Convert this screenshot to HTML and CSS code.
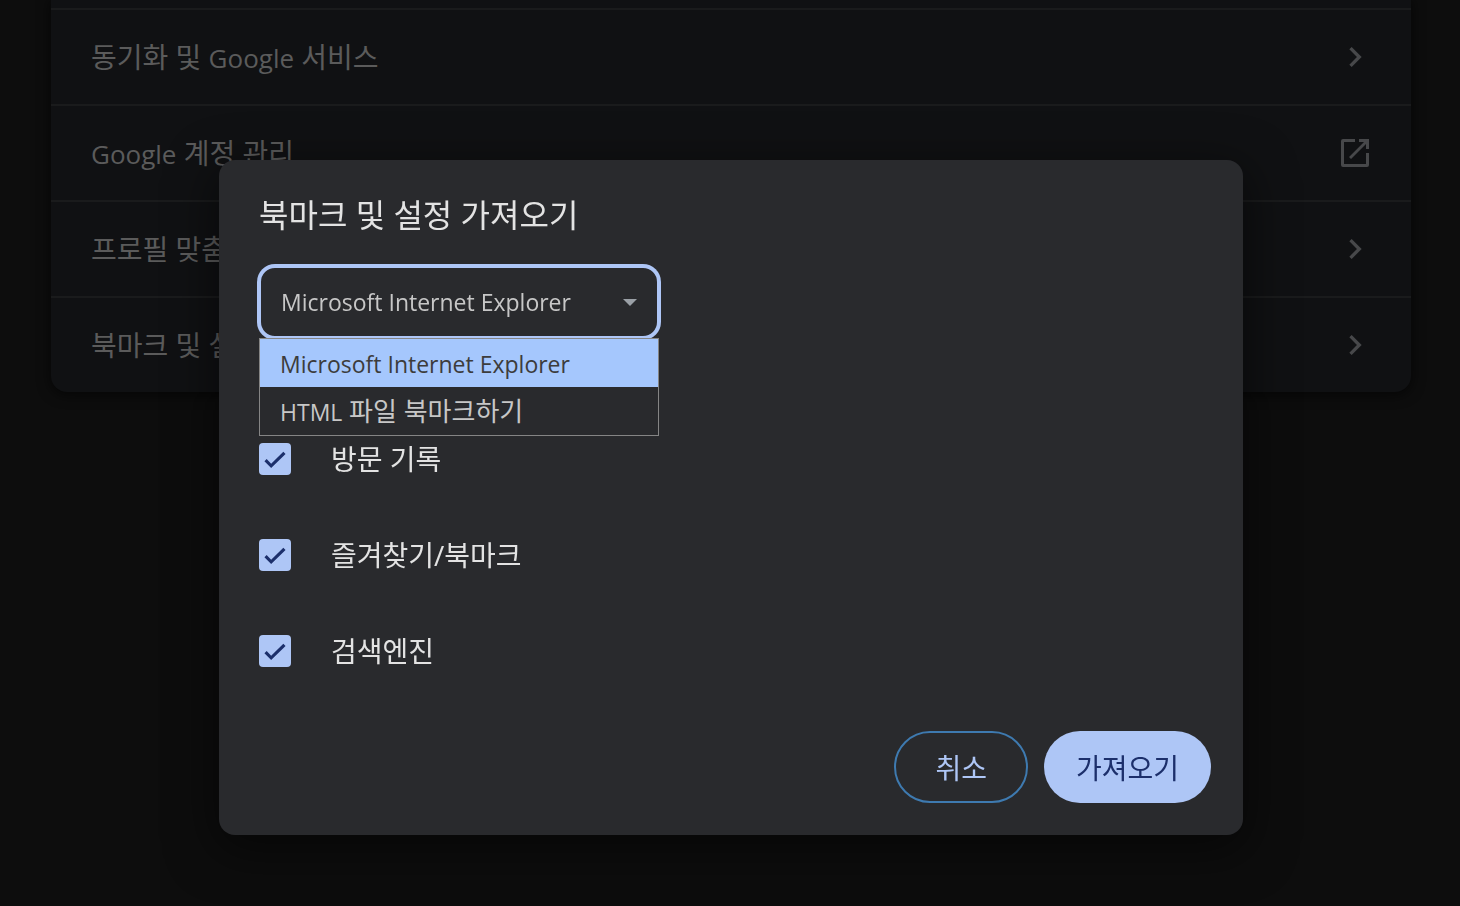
FILE: index.html
```html
<!doctype html>
<html lang="ko">
    <head>
        <meta charset="UTF-8" />
        <meta name="viewport" content="width=device-width, initial-scale=1.0" />
        <title>북마크 및 설정 가져오기</title>
        <link rel="stylesheet" href="styles.css">
    </head>
    <body>
        <main class="card">
            <a class="row" href="#sync">
                <span>동기화 및 <span class="latin">Google</span> 서비스</span>
                <svg class="icon" viewBox="0 0 24 24"><path d="M10 6 8.59 7.41 13.17 12l-4.58 4.59L10 18l6-6z" /></svg>
            </a>
            <a class="row" href="#account">
                <span><span class="latin">Google</span> 계정 관리</span>
                <svg class="icon" viewBox="0 0 40 40">
                    <path d="M20 6v3H9v22h22V20h3v12a2 2 0 0 1-2 2H8a2 2 0 0 1-2-2V8a2 2 0 0 1 2-2zM24 6h10v10h-3v-5L16 26l-2-2L29 9h-5z" />
                </svg>
            </a>
            <a class="row" href="#profile">
                <span>프로필 맞춤설정</span>
                <svg class="icon" viewBox="0 0 24 24"><path d="M10 6 8.59 7.41 13.17 12l-4.58 4.59L10 18l6-6z" /></svg>
            </a>
            <a class="row" href="#import">
                <span>북마크 및 설정 가져오기</span>
                <svg class="icon" viewBox="0 0 24 24"><path d="M10 6 8.59 7.41 13.17 12l-4.58 4.59L10 18l6-6z" /></svg>
            </a>
        </main>

        <div class="overlay">
            <form class="dialog" role="dialog" aria-labelledby="dialog-title">
                <h1 id="dialog-title">북마크 및 설정 가져오기</h1>
                <div class="select-wrap">
                    <select id="browser-select" aria-label="브라우저">
                        <option selected>Microsoft Internet Explorer</option>
                        <option>HTML 파일 북마크하기</option>
                    </select>
                    <svg class="arrow" viewBox="0 0 14 7"><path d="M0 0h14L7 7z" /></svg>
                    <ul class="options" role="listbox">
                        <li class="active" role="option"><span class="latin">Microsoft Internet Explorer</span></li>
                        <li role="option"><span class="latin">HTML</span> 파일 북마크하기</li>
                    </ul>
                </div>
                <div class="checks">
                    <label class="check"><input type="checkbox" checked /><span>방문 기록</span></label>
                    <label class="check"><input type="checkbox" checked /><span>즐겨찾기/북마크</span></label>
                    <label class="check"><input type="checkbox" checked /><span>검색엔진</span></label>
                </div>
                <div class="buttons">
                    <button type="button" class="cancel">취소</button>
                    <button type="button" class="import">가져오기</button>
                </div>
            </form>
        </div>
    </body>
</html>
```
FILE: styles.css
```css
* {
    box-sizing: border-box;
}
body {
    margin: 0;
    min-height: 100vh;
    background-color: #0d0d0d;
    color: #e3e3e3;
    font-family: "Open Sans", "Noto Sans CJK KR", sans-serif;
    font-size: 28px;
    line-height: 32px;
}
.card {
    max-width: 1360px;
    margin: 0 49px 0 51px;
    padding-top: 8px;
    background-color: #101113;
    border-radius: 0 0 16px 16px;
    box-shadow: 0 2px 12px 2px rgba(0, 0, 0, 0.5);
}
.row {
    display: flex;
    align-items: center;
    justify-content: space-between;
    height: 96px;
    padding: 0 36px 0 40px;
    border-top: 2px solid #1a1b1c;
    color: #5b5b5b;
    text-decoration: none;
}
.row .latin {
    font-size: 26px;
}
.icon {
    width: 40px;
    height: 40px;
    fill: #47484a;
}

/* Import dialog */
.overlay {
    position: fixed;
    inset: 0;
    display: flex;
    justify-content: center;
    align-items: flex-start;
    padding: 160px 0 0 2px;
}
.dialog {
    width: 1024px;
    max-width: 90%;
    padding: 31px 32px 32px 40px;
    background-color: #292a2d;
    border-radius: 16px;
    box-shadow: 0 12px 48px 4px rgba(0, 0, 0, 0.5);
}
h1 {
    margin: 0 0 27px;
    font-size: 32px;
    font-weight: 400;
    line-height: 48px;
}
.select-wrap {
    position: relative;
    width: 400px;
}
select {
    display: block;
    width: 100%;
    height: 72px;
    padding: 0 64px 0 20px;
    appearance: none;
    background-color: #292a2d;
    border: 2px solid #aec6f6;
    border-radius: 16px;
    outline: none;
    box-shadow: 0 0 0 2px #aec6f6;
    color: #c7c7c7;
    font-family: inherit;
    font-size: 23px;
}
.arrow {
    position: absolute;
    top: 33px;
    right: 22px;
    width: 14px;
    height: 7px;
    fill: #9aa0a6;
}
.options {
    position: absolute;
    top: 100%;
    left: 0;
    width: 100%;
    margin: 0;
    padding: 0;
    list-style: none;
    background-color: #292a2d;
    border: 1px solid #858585;
    color: #c7c7c7;
    font-size: 26px;
    line-height: 48px;
}
.options li {
    height: 48px;
    padding: 0 20px;
}
.options .latin {
    font-size: 23px;
}
.options .active {
    background-color: #a5c7fd;
    color: #3c3c3c;
}
.checks {
    display: flex;
    flex-direction: column;
    gap: 64px;
    margin-top: 105px;
}
.check {
    display: flex;
    align-items: center;
    gap: 40px;
    height: 32px;
}
.check input {
    appearance: none;
    width: 32px;
    height: 32px;
    margin: 0;
    background-color: #aec6f6;
    border-radius: 4px;
}
.check input:checked::before {
    content: "";
    display: block;
    height: 100%;
    background-color: #1c2f6b;
    clip-path: polygon(38% 65%, 24% 50%, 17% 57%, 38% 78%, 83% 34%, 76% 27%);
}
.buttons {
    display: flex;
    justify-content: flex-end;
    gap: 16px;
    margin-top: 64px;
}
button {
    height: 72px;
    padding: 0 32px;
    border: none;
    border-radius: 36px;
    font-family: inherit;
    font-size: 28px;
    cursor: pointer;
}
.cancel {
    padding: 0 39px;
    background-color: transparent;
    border: 2px solid #3e7ab0;
    color: #aec6f6;
}
.import {
    background-color: #aec6f6;
    color: #1c2f6b;
}
```
